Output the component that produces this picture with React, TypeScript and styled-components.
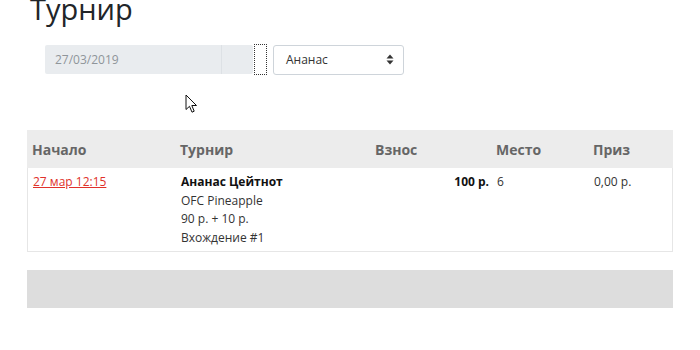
import React from "react";
import styled, { createGlobalStyle } from "styled-components";

const GlobalStyle = createGlobalStyle`
  html, body {
    margin: 0;
    padding: 0;
    background: #ffffff;
    font-family: "Open Sans", "Liberation Sans", sans-serif;
    color: #212529;
  }
`;

const results = [
  {
    start: "27 мар 12:15",
    name: "Ананас Цейтнот",
    game: "OFC Pineapple",
    buyin: "90 р. + 10 р.",
    entry: "Вхождение #1",
    fee: "100 р.",
    place: "6",
    prize: "0,00 р.",
  },
];

const Cursor = () => (
  <CursorBox width="13" height="20" viewBox="0 0 13 20">
    <path
      d="M1 1 L1 15.5 L4.5 12.3 L7 18.2 L9.2 17.2 L6.8 11.5 L11.5 11.5 Z"
      fill="#ffffff"
      stroke="#111111"
      strokeWidth="1"
      strokeLinejoin="round"
    />
  </CursorBox>
);

const App: React.FC = () => {
  return (
    <Page>
      <GlobalStyle />
      <Title>Турнир</Title>
      <Filters>
        <DateField>
          <DateText>27/03/2019</DateText>
          <DateButton />
        </DateField>
        <FocusRing />
        <Select>
          <span>Ананас</span>
          <Arrows>
            <svg width="8" height="11" viewBox="0 0 8 11">
              <path d="M4 0.5 L7.5 4.5 L0.5 4.5 Z" fill="#333" />
              <path d="M4 10.5 L7.5 6.5 L0.5 6.5 Z" fill="#333" />
            </svg>
          </Arrows>
        </Select>
        <Cursor />
      </Filters>

      <Table>
        <HeadRow>
          <HeadCell>Начало</HeadCell>
          <HeadCell>Турнир</HeadCell>
          <HeadCell>Взнос</HeadCell>
          <HeadCell>Место</HeadCell>
          <HeadCell>Приз</HeadCell>
        </HeadRow>
        {results.map((r) => (
          <BodyRow key={r.start}>
            <Cell>
              <StartLink href="#">{r.start}</StartLink>
            </Cell>
            <Cell>
              <Strong>{r.name}</Strong>
              <div>{r.game}</div>
              <div>{r.buyin}</div>
              <div>{r.entry}</div>
            </Cell>
            <Cell $right>
              <Strong>{r.fee}</Strong>
            </Cell>
            <Cell>{r.place}</Cell>
            <Cell>{r.prize}</Cell>
          </BodyRow>
        ))}
      </Table>

      <Footer />
    </Page>
  );
};

export default App;

const Page = styled.div`
  width: 700px;
  height: 350px;
  overflow: hidden;
  padding: 0 27px;
  box-sizing: border-box;
`;

const Title = styled.h1`
  margin: -11px 0 0 3px;
  font-size: 29px;
  font-weight: 400;
  line-height: 40px;
  color: #212529;
`;

const Filters = styled.div`
  position: relative;
  display: flex;
  align-items: center;
  margin: 15px 0 0 18px;
  height: 31px;
`;

const DateField = styled.div`
  display: flex;
  width: 208px;
  height: 29px;
  background: #e9ecef;
  border-radius: 2px;
`;

const DateText = styled.div`
  flex: 1;
  padding-left: 10px;
  font-size: 12px;
  line-height: 29px;
  color: #8f959a;
`;

const DateButton = styled.div`
  width: 31px;
  border-left: 1px solid #dde1e5;
`;

const FocusRing = styled.div`
  width: 11px;
  height: 29px;
  margin-left: 1px;
  border: 1px dotted #333;
`;

const Select = styled.div`
  display: flex;
  align-items: center;
  justify-content: space-between;
  box-sizing: border-box;
  width: 131px;
  height: 30px;
  margin-left: 6px;
  padding: 0 9px 0 12px;
  border: 1px solid #ced4da;
  border-radius: 3px;
  font-size: 12px;
  color: #333;
`;

const Arrows = styled.span`
  display: flex;
`;

const CursorBox = styled.svg`
  position: absolute;
  left: 140px;
  top: 50px;
`;

const Table = styled.div`
  margin-top: 55px;
  width: 646px;
`;

const columns = "148px 195px 121px 97px 1fr";

const HeadRow = styled.div`
  display: grid;
  grid-template-columns: ${columns};
  height: 38px;
  align-items: center;
  background: #ececec;
`;

const HeadCell = styled.div`
  padding-left: 5px;
  font-size: 14px;
  font-weight: 700;
  color: #666666;
`;

const BodyRow = styled.div`
  display: grid;
  grid-template-columns: ${columns};
  padding: 5px 0 3px;
  border: 1px solid #e6e6e6;
  border-top: none;
  font-size: 12px;
  line-height: 18.7px;
  color: #333;
`;

const Cell = styled.div<{ $right?: boolean }>`
  padding: 0 ${(p) => (p.$right ? "3px" : "0")} 0 5px;
  text-align: ${(p) => (p.$right ? "right" : "left")};
`;

const StartLink = styled.a`
  color: #e0312b;
  text-decoration: underline;
`;

const Strong = styled.div`
  font-weight: 700;
  color: #111;
`;

const Footer = styled.div`
  margin-top: 18px;
  width: 646px;
  height: 38px;
  background: #dddddd;
`;
